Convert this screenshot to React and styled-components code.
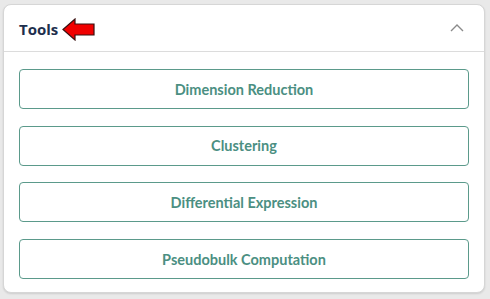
import React from 'react'
import styled, { createGlobalStyle } from 'styled-components'

const GlobalStyle = createGlobalStyle`
  body {
    margin: 0;
    background: #e9e9e9;
    font-family: Lato, "Liberation Sans", sans-serif;
  }
`

const Page = styled.div`
  width: 490px;
  height: 299px;
  padding: 4px 5px 6px 3px;
  box-sizing: border-box;
`

const Card = styled.section`
  height: 100%;
  box-sizing: border-box;
  background: #fff;
  border: 1px solid #d6d6d6;
  border-radius: 8px;
  box-shadow: 0 1px 2px rgba(0, 0, 0, 0.12);
  display: flex;
  flex-direction: column;
`

const Header = styled.header`
  height: 48px;
  box-sizing: border-box;
  display: flex;
  align-items: center;
  justify-content: space-between;
  padding: 0 20px 0 15px;
  border-bottom: 1px solid #dcdcdc;
`

const Title = styled.div`
  display: flex;
  align-items: center;
  gap: 4px;
  font-family: "Open Sans", "Liberation Sans", sans-serif;
  font-size: 15px;
  font-weight: 700;
  color: #1d2f4d;
  padding-top: 2px;
`

const Body = styled.div`
  flex: 1;
  display: flex;
  flex-direction: column;
  gap: 16.67px;
  padding: 17px 15px 13px 15px;
`

const ToolButton = styled.button`
  height: 40px;
  width: 100%;
  background: #fff;
  border: 1.5px solid #5b9a8b;
  border-radius: 4px;
  color: #4b8f82;
  font-family: Lato, "Liberation Sans", sans-serif;
  font-size: 14.5px;
  font-weight: 700;
  cursor: pointer;
`

const Arrow = () => (
  <svg width="34" height="23" viewBox="0 0 34 23">
    <polygon
      points="1,11.5 13,1 13,6 32,6 32,17 13,17 13,22"
      fill="#f00000"
      stroke="#3a1010"
      strokeWidth="1.2"
      strokeLinejoin="miter"
    />
  </svg>
)

const Chevron = () => (
  <svg width="14" height="10" viewBox="0 0 14 10">
    <polyline points="1,8 7,2 13,8" fill="none" stroke="#8a8a8a" strokeWidth="1.4" />
  </svg>
)

const tools = [
  'Dimension Reduction',
  'Clustering',
  'Differential Expression',
  'Pseudobulk Computation',
]

export default function App() {
  return (
    <>
      <GlobalStyle />
      <Page>
        <Card>
          <Header>
            <Title>
              Tools
              <Arrow />
            </Title>
            <Chevron />
          </Header>
          <Body>
            {tools.map((t) => (
              <ToolButton key={t}>{t}</ToolButton>
            ))}
          </Body>
        </Card>
      </Page>
    </>
  )
}
